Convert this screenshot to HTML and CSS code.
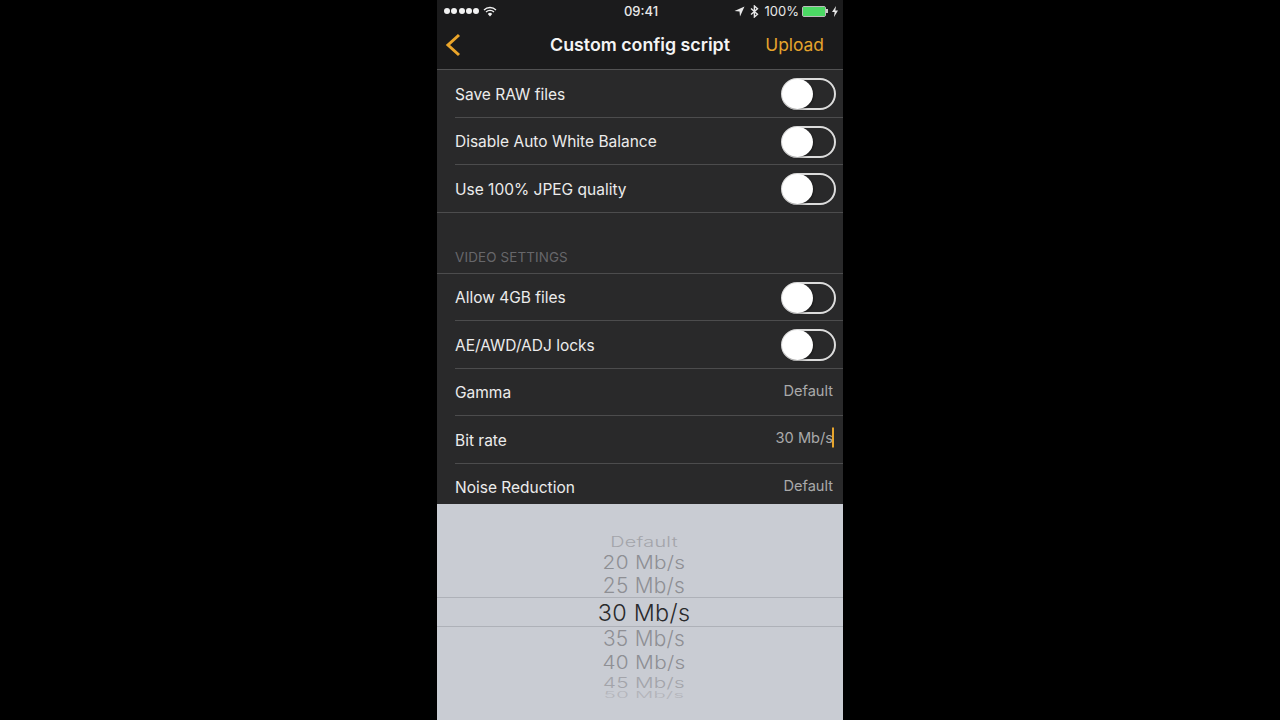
FILE: index.html
```html
<!DOCTYPE html>
<html lang="en">
<head>
<meta charset="utf-8">
<title>Custom config script</title>
<link rel="stylesheet" href="styles.css">
</head>
<body>
<main class="phone">
  <header class="top">
    <div class="status">
      <div class="status-left">
        <span class="dots"><i></i><i></i><i></i><i></i><i></i></span>
        <svg class="wifi" width="14" height="11" viewBox="0 0 14 11"><path d="M1 4 A8.5 8.5 0 0 1 13 4" fill="none" stroke="#f2f2f2" stroke-width="1.3"/><path d="M3 6 A5.7 5.7 0 0 1 11 6" fill="none" stroke="#f2f2f2" stroke-width="1.3"/><path d="M7 10.5 L4.8 8 A3 3 0 0 1 9.2 8 Z" fill="#f2f2f2"/></svg>
      </div>
      <div class="clock">09:41</div>
      <div class="status-right">
        <svg width="11" height="11" viewBox="0 0 11 11"><path d="M10.5 .5 L.5 5 L5.5 5.5 L6 10.5 Z" fill="#e8e8e8"/></svg>
        <svg class="bt" width="9" height="13" viewBox="0 0 9 13"><path d="M1 3.5 L7.5 9.3 L4.4 12 V1 L7.5 3.7 L1 9.5" fill="none" stroke="#e8e8e8" stroke-width="1.4"/></svg>
        <span class="pct">100%</span>
        <span class="battery"><span class="battery-fill"></span></span><span class="nub"></span>
        <svg class="bolt" width="6" height="11" viewBox="0 0 6 11"><path d="M4 0 L0 6 H2.6 L2 11 L6 4.6 H3.3 Z" fill="#e8e8e8"/></svg>
      </div>
    </div>
    <nav class="nav">
      <svg class="back" width="16" height="24" viewBox="0 0 16 24"><path d="M14 2 L3 12 L14 22" fill="none" stroke="#eaa52a" stroke-width="3"/></svg>
      <h1 class="title">Custom config script</h1>
      <span class="upload">Upload</span>
    </nav>
  </header>

  <section class="content">
    <div class="row"><span class="label">Save RAW files</span><span class="switch"></span></div>
    <div class="row"><span class="label">Disable Auto White Balance</span><span class="switch"></span></div>
    <div class="row row-end"><span class="label">Use 100% JPEG quality</span><span class="switch"></span></div>
    <div class="section-head">VIDEO SETTINGS</div>
    <div class="row"><span class="label">Allow 4GB files</span><span class="switch"></span></div>
    <div class="row"><span class="label">AE/AWD/ADJ locks</span><span class="switch"></span></div>
    <div class="row"><span class="label">Gamma</span><span class="value">Default</span></div>
    <div class="row"><span class="label">Bit rate</span><span class="value value-caret">30 Mb/s<span class="caret"></span></span></div>
    <div class="row row-end"><span class="label">Noise Reduction</span><span class="value">Default</span></div>
  </section>

  <section class="picker">
    <div class="wheel">
      <div class="opt opt-1"><span>Default</span></div>
      <div class="opt opt-2"><span>20 Mb/s</span></div>
      <div class="opt opt-3"><span>25 Mb/s</span></div>
      <div class="opt opt-sel"><span>30 Mb/s</span></div>
      <div class="opt opt-3"><span>35 Mb/s</span></div>
      <div class="opt opt-2 opt-40"><span>40 Mb/s</span></div>
      <div class="opt opt-45"><span>45 Mb/s</span></div>
      <div class="opt opt-0"><span>50 Mb/s</span></div>
    </div>
  </section>
</main>
</body>
</html>
```
FILE: styles.css
```css
* { box-sizing: border-box; }
html, body { margin: 0; height: 100%; background: #000; overflow: hidden; }
body { font-family: Inter, "Liberation Sans", sans-serif; color: #efefef; }

.phone {
  width: 406px;
  height: 720px;
  margin: 0 auto;
  background: #29292a;
  display: flex;
  flex-direction: column;
  overflow: hidden;
}

.top { height: 70px; background: #1b1b1c; border-bottom: 1px solid #525253; flex: none; }
.status { height: 22px; display: grid; grid-template-columns: 1fr auto 1fr; align-items: center; padding: 0 5px 0 7px; font-size: 13px; color: #e8e8e8; }
.status-left { display: flex; align-items: center; gap: 3px; }
.dots { display: flex; gap: 1.3px; }
.dots i { width: 6px; height: 6px; border-radius: 50%; background: #f2f2f2; }
.wifi { margin-left: 1px; }
.clock { font-weight: 500; }
.status-right { display: flex; align-items: center; justify-content: flex-end; }
.bt { margin-left: 5px; }
.pct { margin-left: 6px; font-size: 13px; }
.battery { margin-left: 3px; width: 24px; height: 11px; border: 1px solid #bbb; border-radius: 2px; display: flex; }
.battery-fill { flex: 1; background: #4cd964; }
.nub { width: 2px; height: 4px; background: #ccc; }
.bolt { margin-left: 4px; }

.nav { height: 47px; display: grid; grid-template-columns: 1fr auto 1fr; align-items: center; padding: 0 19px 2px; }
.back { display: block; margin-left: -11px; }
.title { margin: 0; font-size: 17.8px; font-weight: 600; color: #f4f4f4; }
.upload { justify-self: end; font-size: 17.4px; color: #e6a42c; }

.content { height: 434px; flex: none; overflow: hidden; }
.row {
  height: 47.5px;
  margin-left: 18px;
  padding: 1.5px 7px 0 0;
  display: flex;
  align-items: center;
  justify-content: space-between;
  border-bottom: 1px solid #4c4c4d;
}
.row-end { margin-left: 0; padding-left: 18px; }
.label { font-size: 15.5px; color: #ececec; }
.switch {
  position: relative;
  width: 55px;
  height: 32px;
  border: 2px solid #dcdcdc;
  border-radius: 16px;
}
.switch::after {
  content: "";
  position: absolute;
  left: -1px;
  top: -1px;
  width: 31px;
  height: 30px;
  border-radius: 50%;
  background: #fff;
  box-shadow: 1px 1px 2px rgba(0, 0, 0, .35);
}
.section-head {
  height: 61px;
  padding: 36px 18px 0;
  font-size: 13.4px;
  letter-spacing: .15px;
  color: #67676a;
  border-bottom: 1px solid #4c4c4d;
}
.value { font-size: 14.6px; color: #a9a9aa; margin-right: 3px; transform: translateY(-2.5px); }
.value-caret { position: relative; }
.caret { position: absolute; right: -1px; top: -1px; width: 2.5px; height: 20px; background: #e6a42c; }

.picker { flex: 1; background: #c9ccd3; padding: 29px 0 0 8px; }
.wheel { display: flex; flex-direction: column; align-items: center; }
.opt { display: flex; align-items: center; justify-content: center; align-self: stretch; color: #8e8f94; font-size: 20.8px; font-weight: 300; letter-spacing: .3px; }
.opt span { display: block; white-space: nowrap; }
.opt-0 { height: 9px; font-size: 20.3px; color: #b3b4ba; }
.opt-0 span { transform: scaleY(.45); }
.opt-1 { height: 18px; font-size: 19.8px; color: #a3a4aa; }
.opt-1 span { transform: scaleY(.7); }
.opt-2 { height: 22px; }
.opt-2 span { transform: scaleY(.88); }
.opt-3 { height: 25px; }
.opt-sel { height: 30px; margin: -1px 0 -1px -8px; padding-left: 8px; border-top: 1px solid #aeb1b8; border-bottom: 1px solid #aeb1b8; color: #2a2a2c; font-size: 23.4px; }
.opt-40 { height: 23px; }
.opt-45 { font-size: 20.6px; height: 16px; color: #a3a4aa; }
.opt-45 span { transform: scaleY(.7); }
```
